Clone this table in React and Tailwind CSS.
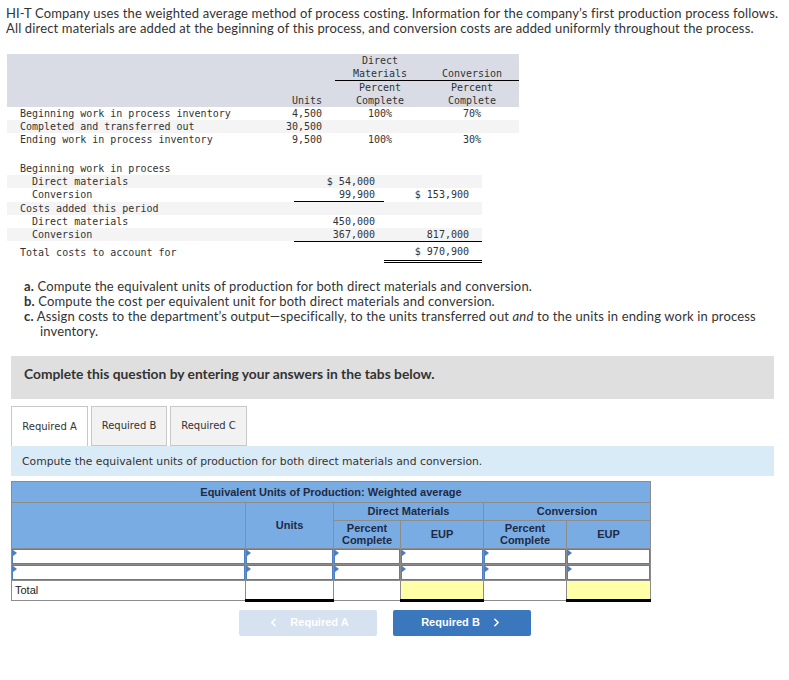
import React from 'react';
import { ChevronLeft, ChevronRight } from 'lucide-react';

const sans = { fontFamily: 'Lato, "Liberation Sans", sans-serif' };
const mono = { fontFamily: '"DejaVu Sans Mono", "Liberation Mono", monospace' };
const tahoma = { fontFamily: '"DejaVu Sans", Verdana, sans-serif' };
const arial = { fontFamily: '"Liberation Sans", Arial, sans-serif' };

// unit data for the first block
const unitRows = [
  { label: 'Beginning work in process inventory', units: '4,500', dm: '100%', conv: '70%' },
  { label: 'Completed and transferred out', units: '30,500', dm: '', conv: '' },
  { label: 'Ending work in process inventory', units: '9,500', dm: '100%', conv: '30%' },
];

// small blue marker in the top-left corner of an answer cell
const InputCell = () => (
  <td className="border border-[#8c8c8c] p-0">
    <div className="relative h-[15px] border border-[#4f7fbf] bg-white">
      <span className="absolute left-0 top-0 h-0 w-0 border-y-[3px] border-l-[4px] border-y-transparent border-l-[#4a7dc0]" />
    </div>
  </td>
);

export default function App() {
  return (
    <div className="w-[789px] bg-white text-[#333]">
      <div className="pl-[6px] pt-[6px] text-[13px] leading-[15px] tracking-[0.15px]" style={sans}>
        <p>HI-T Company uses the weighted average method of process costing. Information for the company’s first production process follows.</p>
        <p>All direct materials are added at the beginning of this process, and conversion costs are added uniformly throughout the process.</p>
      </div>

      {/* units table */}
      <table className="ml-[7px] mt-[18px] border-collapse text-[10px] leading-[13px]" style={mono}>
        <colgroup>
          <col className="w-[275px]" />
          <col className="w-[53px]" />
          <col className="w-[90px]" />
          <col className="w-[94px]" />
        </colgroup>
        <thead className="bg-[#d9dce5] font-normal">
          <tr>
            <th />
            <th />
            <th className="border-b border-black align-bottom font-normal">Direct<br />Materials</th>
            <th className="border-b border-black align-bottom font-normal">Conversion</th>
          </tr>
          <tr>
            <th />
            <th className="pr-[13px] text-right align-bottom font-normal">Units</th>
            <th className="font-normal">Percent<br />Complete</th>
            <th className="font-normal">Percent<br />Complete</th>
          </tr>
        </thead>
        <tbody>
          {unitRows.map((r, i) => (
            <tr key={r.label} className={i % 2 === 1 ? 'bg-[#f4f4f4]' : ''}>
              <td className="pl-[13px]">{r.label}</td>
              <td className="pr-[13px] text-right">{r.units}</td>
              <td className="text-center">{r.dm}</td>
              <td className="text-center">{r.conv}</td>
            </tr>
          ))}
        </tbody>
      </table>

      {/* costs table */}
      <table className="ml-[7px] mt-[16px] border-collapse text-[10px] leading-[13px]" style={mono}>
        <colgroup>
          <col className="w-[287px]" />
          <col className="w-[90px]" />
          <col className="w-[98px]" />
        </colgroup>
        <tbody>
          <tr>
            <td className="pl-[13px]">Beginning work in process</td>
            <td />
            <td />
          </tr>
          <tr className="bg-[#f4f4f4]">
            <td className="pl-[25px]">Direct materials</td>
            <td className="pr-[9px] text-right">$ 54,000</td>
            <td />
          </tr>
          <tr>
            <td className="pl-[25px]">Conversion</td>
            <td className="border-b border-black pr-[9px] text-right">99,900</td>
            <td className="pr-[13px] text-right">$ 153,900</td>
          </tr>
          <tr className="bg-[#f4f4f4]">
            <td className="pl-[13px]">Costs added this period</td>
            <td />
            <td />
          </tr>
          <tr>
            <td className="pl-[25px]">Direct materials</td>
            <td className="pr-[9px] text-right">450,000</td>
            <td />
          </tr>
          <tr className="bg-[#f4f4f4]">
            <td className="pl-[25px]">Conversion</td>
            <td className="border-b border-black pr-[9px] text-right">367,000</td>
            <td className="border-b border-black pr-[13px] text-right">817,000</td>
          </tr>
          <tr>
            <td className="pl-[13px] pt-[3px]">Total costs to account for</td>
            <td />
            <td className="border-b-[3px] border-double border-black pb-[2px] pr-[13px] pt-[3px] text-right">$ 970,900</td>
          </tr>
        </tbody>
      </table>

      {/* requirements */}
      <div className="mt-[16px] pl-[24px] pr-[20px] text-[13px] leading-[15px] tracking-[0.15px]" style={sans}>
        <p><span className="font-bold">a.</span> Compute the equivalent units of production for both direct materials and conversion.</p>
        <p><span className="font-bold">b.</span> Compute the cost per equivalent unit for both direct materials and conversion.</p>
        <p className="pl-[16px] -indent-[16px]"><span className="font-bold">c.</span> Assign costs to the department’s output—specifically, to the units transferred out <i>and</i> to the units in ending work in process inventory.</p>
      </div>

      <div className="mx-[11px] mt-[17px] h-[43px] w-[763px] bg-[#dfdfdf] pl-[13px] pt-[10px] text-[13.8px] font-bold leading-[15px]" style={sans}>
        Complete this question by entering your answers in the tabs below.
      </div>

      {/* tabs */}
      <div className="ml-[11px] mt-[7px] flex w-[763px] items-end gap-[3px] text-[10px]" style={tahoma}>
        <div className="flex h-[40px] w-[77px] items-center justify-center border border-b-0 border-[#c8c8c8] bg-white">Required A</div>
        <div className="flex h-[40px] w-[76px] items-center justify-center border border-[#c8c8c8] bg-[#f2f2f2]">Required B</div>
        <div className="flex h-[40px] w-[77px] items-center justify-center border border-[#c8c8c8] bg-[#f2f2f2]">Required C</div>
      </div>
      <div className="ml-[11px] flex h-[30px] w-[763px] items-center bg-[#daebf8] pl-[11px] pt-[3px] text-[10.8px]" style={tahoma}>
        Compute the equivalent units of production for both direct materials and conversion.
      </div>

      {/* answer grid */}
      <table className="ml-[11px] mt-[5px] border-collapse text-[11px] leading-[12px] text-[#222]" style={arial}>
        <colgroup>
          <col className="w-[234px]" />
          <col className="w-[88px]" />
          <col className="w-[67px]" />
          <col className="w-[83px]" />
          <col className="w-[83px]" />
          <col className="w-[84px]" />
        </colgroup>
        <thead className="bg-[#79ace3] font-bold text-[#1f2a44]">
          <tr className="h-[21px]">
            <th colSpan={6} className="border border-[#8c8c8c]">Equivalent Units of Production: Weighted average</th>
          </tr>
          <tr className="h-[18px]">
            <th rowSpan={2} className="border border-[#8c8c8c]" />
            <th rowSpan={2} className="border border-[#8c8c8c]">Units</th>
            <th colSpan={2} className="border border-[#8c8c8c]">Direct Materials</th>
            <th colSpan={2} className="border border-[#8c8c8c]">Conversion</th>
          </tr>
          <tr className="h-[28px]">
            <th className="border border-[#8c8c8c]">Percent<br />Complete</th>
            <th className="border border-[#8c8c8c]">EUP</th>
            <th className="border border-[#8c8c8c]">Percent<br />Complete</th>
            <th className="border border-[#8c8c8c]">EUP</th>
          </tr>
        </thead>
        <tbody>
          {[0, 1].map((k) => (
            <tr key={k}>
              <InputCell />
              <InputCell />
              <InputCell />
              <InputCell />
              <InputCell />
              <InputCell />
            </tr>
          ))}
          <tr className="h-[20px]">
            <td className="border border-[#8c8c8c] pl-[3px]">Total</td>
            <td className="border border-[#8c8c8c] border-b-[3px] border-t-black border-b-black" />
            <td className="border border-[#8c8c8c]" />
            <td className="border border-[#8c8c8c] border-b-[3px] border-t-black border-b-black bg-[#ffffa8]" />
            <td className="border border-[#8c8c8c]" />
            <td className="border border-[#8c8c8c] border-b-[3px] border-t-black border-b-black bg-[#ffffa8]" />
          </tr>
        </tbody>
      </table>

      <div className="mt-[8px] flex gap-[16px] pb-[44px] pl-[239px] text-[11px] font-bold text-white" style={arial}>
        <div className="flex h-[26px] w-[138px] items-center justify-center gap-[10px] rounded-[2px] bg-[#d6e2f0]">
          <ChevronLeft size={13} strokeWidth={3} />
          <span>Required A</span>
        </div>
        <div className="flex h-[26px] w-[138px] items-center justify-center gap-[10px] rounded-[2px] bg-[#3a77bc]">
          <span>Required B</span>
          <ChevronRight size={13} strokeWidth={3} />
        </div>
      </div>
    </div>
  );
}
